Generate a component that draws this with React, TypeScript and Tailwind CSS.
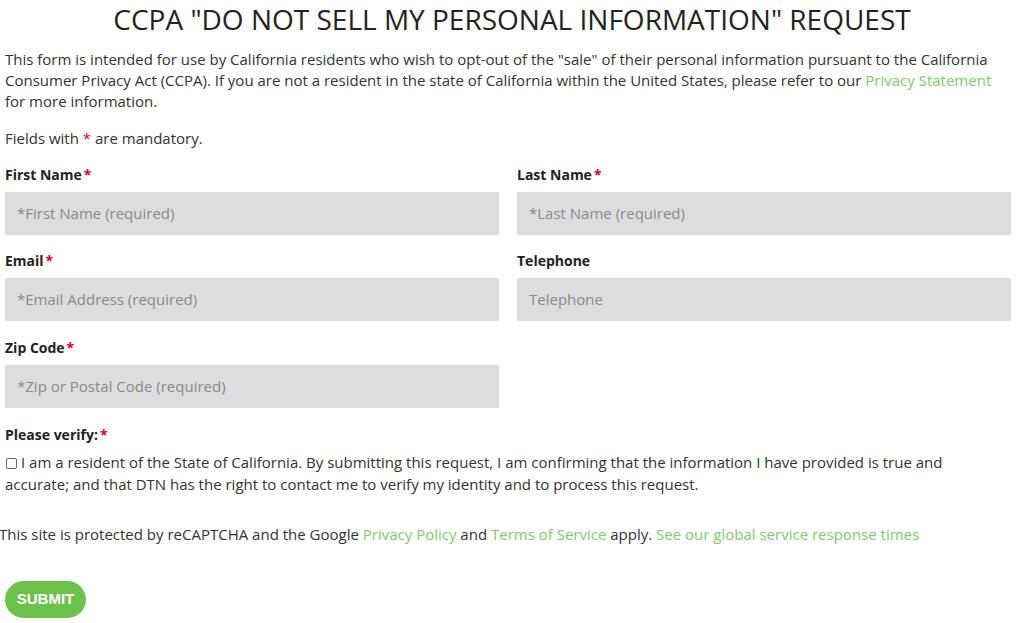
import React from "react";

const Req = () => <span className="ml-[2px] text-[#e3000f]">*</span>;

function Field({ label, required, placeholder }: { label: string; required?: boolean; placeholder: string }) {
  return (
    <div className="flex flex-col">
      <label className="h-[18px] text-[14px] font-bold leading-[18px] text-[#222]">
        {label}
        {required && <Req />}
      </label>
      <div className="mt-[8px] flex h-[43px] items-center bg-[#dcdddf] px-[12px] text-[15px] text-[#8a8a8a]">
        {placeholder}
      </div>
    </div>
  );
}

export default function App() {
  return (
    <div className="min-h-[623px] bg-white text-[#333] font-['Open_Sans','Liberation_Sans',sans-serif]">
      <h1 className="pt-[2px] text-center text-[28px] leading-[34px] text-[#222]">
        CCPA "DO NOT SELL MY PERSONAL INFORMATION" REQUEST
      </h1>
      <div className="w-[1011px] pl-[5px]">
        <p className="mt-[13px] text-[15px] leading-[21px]">
          This form is intended for use by California residents who wish to opt-out of the "sale" of their personal information pursuant to the California
          <br />
          Consumer Privacy Act (CCPA). If you are not a resident in the state of California within the United States, please refer to our{" "}
          <span className="text-[#7ccc6c]">Privacy Statement</span>
          <br />
          for more information.
        </p>
        <p className="mt-[16px] text-[15px] leading-[21px]">
          Fields with <span className="text-[#e3000f]">*</span> are mandatory.
        </p>
        <div className="mt-[17px] grid grid-cols-2 gap-x-[18px] gap-y-[17px]">
          <Field label="First Name" required placeholder="*First Name (required)" />
          <Field label="Last Name" required placeholder="*Last Name (required)" />
          <Field label="Email" required placeholder="*Email Address (required)" />
          <Field label="Telephone" placeholder="Telephone" />
          <div className="mt-[1px]">
            <Field label="Zip Code" required placeholder="*Zip or Postal Code (required)" />
          </div>
        </div>
        <div className="mt-[18px] text-[14px] font-bold leading-[18px] text-[#222]">
          Please verify:<Req />
        </div>
        <p className="mt-[7px] text-[15px] leading-[22px]">
          <span className="mr-[4px] ml-[1px] inline-block h-[11px] w-[11px] rounded-[2px] border border-[#666] align-[-1px]" />
          I am a resident of the State of California. By submitting this request, I am confirming that the information I have provided is true and
          <br />
          accurate; and that DTN has the right to contact me to verify my identity and to process this request.
        </p>
      </div>
      <p className="-ml-[1px] mt-[29px] text-[15px] leading-[21px]">
        This site is protected by reCAPTCHA and the Google <span className="text-[#7ccc6c]">Privacy Policy</span> and{" "}
        <span className="text-[#7ccc6c]">Terms of Service</span> apply.{" "}
        <span className="text-[#7ccc6c]">See our global service response times</span>
      </p>
      <div className="px-[5px] pt-[36px]">
        <button className="flex h-[37px] w-[81px] items-center justify-center rounded-full bg-[#6cc24a] text-[15px] font-bold text-white font-['Liberation_Sans',sans-serif]">
          SUBMIT
        </button>
      </div>
    </div>
  );
}
